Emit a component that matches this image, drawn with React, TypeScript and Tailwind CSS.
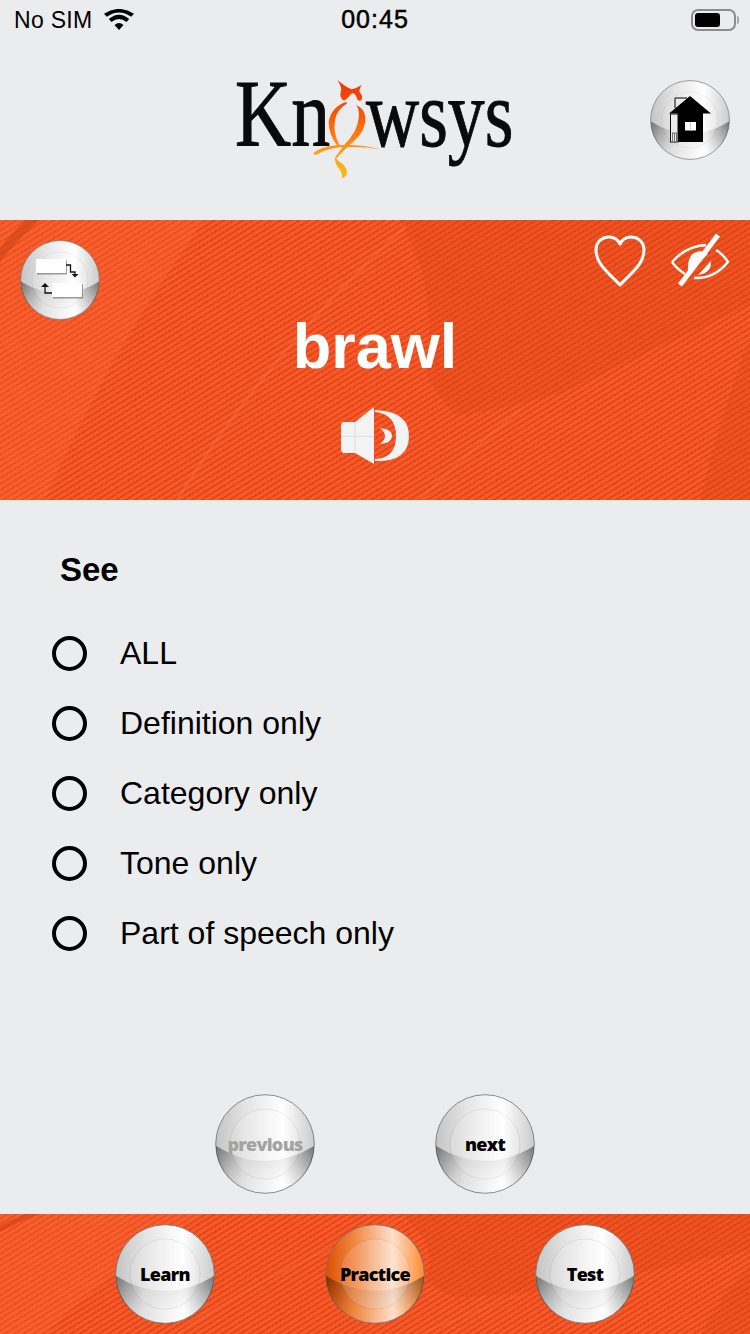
import { useId } from 'react'

const options = ['ALL', 'Definition only', 'Category only', 'Tone only', 'Part of speech only']

function Orb({ label, size = 100, tone = 'silver', muted = false, children }: any): JSX.Element {
  const id = useId().replace(/:/g, '')
  const orange = tone === 'orange'
  return (
    <div className="relative shrink-0 flex items-center justify-center" style={{ width: size, height: size }}>
      <svg viewBox="0 0 100 100" className="absolute inset-0 w-full h-full">
        <defs>
          <linearGradient id={`${id}a`} x1="0" x2="1" y1="0" y2="0">
            <stop offset="0" stopColor={orange ? '#dd4f00' : '#c4c4c4'} />
            <stop offset="0.3" stopColor={orange ? '#f08a45' : '#e4e4e4'} />
            <stop offset="0.68" stopColor={orange ? '#fde0cc' : '#ffffff'} />
            <stop offset="1" stopColor={orange ? '#ff8a2e' : '#cbcbcb'} />
          </linearGradient>
          <linearGradient id={`${id}b`} x1="0" x2="0" y1="0" y2="1">
            <stop offset="0" stopColor="#000000" stopOpacity="0.1" />
            <stop offset="0.7" stopColor="#000000" stopOpacity="0" />
          </linearGradient>
          <linearGradient id={`${id}c`} x1="0" x2="1" y1="0" y2="0">
            <stop offset="0" stopColor="#000000" stopOpacity="0.36" />
            <stop offset="0.28" stopColor="#000000" stopOpacity="0.02" />
            <stop offset="0.72" stopColor="#000000" stopOpacity="0.02" />
            <stop offset="1" stopColor="#000000" stopOpacity="0.36" />
          </linearGradient>
          <linearGradient id={`${id}f`} x1="0" x2="0" y1="52" y2="96" gradientUnits="userSpaceOnUse">
            <stop offset="0" stopColor="#ffffff" />
            <stop offset="1" stopColor="#000000" />
          </linearGradient>
          <mask id={`${id}m`}>
            <rect width="100" height="100" fill={`url(#${id}f)`} />
          </mask>
        </defs>
        <circle cx="50" cy="50" r="49.3" fill={`url(#${id}a)`} stroke="#707070" strokeWidth="0.8" />
        <path d="M1 52 Q50 82 99 52 A49 49 0 0 1 1 52 Z" fill={`url(#${id}b)`} />
        <path d="M1 52 Q50 82 99 52 A49 49 0 0 1 1 52 Z" fill={`url(#${id}c)`} mask={`url(#${id}m)`} />
        <circle cx="50" cy="50" r="35" fill="#ffffff" fillOpacity="0.12" stroke="#000000" strokeOpacity="0.1" strokeWidth="0.7" />
      </svg>
      {label && (
        <span
          className={`relative font-extrabold text-[18px] tracking-[-0.7px] font-['Open_Sans',sans-serif] ${muted ? 'text-[#a3a3a3]' : 'text-black'}`}
        >
          {label}
        </span>
      )}
      {children}
    </div>
  )
}

function Feathers(): JSX.Element {
  return (
    <svg className="absolute inset-0 w-full h-full" viewBox="0 0 750 280" preserveAspectRatio="none">
      <path d="M0 280 H45 Q110 130 205 0 H0 Z" fill="#ff6b3a" fillOpacity="0.3" />
      <path d="M0 42 Q15 22 40 0 H26 Q10 14 0 28 Z" fill="#c93c10" fillOpacity="0.5" />
      <path d="M400 0 H750 V85 Q660 125 574 168 Q510 190 455 195 Q435 175 426 152 Q440 70 400 0 Z" fill="#dd4414" fillOpacity="0.3" />
      <path d="M700 280 Q725 180 750 120 V280 Z" fill="#dd4414" fillOpacity="0.3" />
      <path d="M177 280 Q270 130 406 6" fill="none" stroke="#ff6f3f" strokeWidth="3" strokeOpacity="0.4" />
      <path d="M420 280 Q470 230 520 190" fill="none" stroke="#ff6f3f" strokeWidth="3" strokeOpacity="0.3" />
    </svg>
  )
}

function Logo(): JSX.Element {
  const letters = "block whitespace-nowrap origin-left font-['Liberation_Serif',serif] text-[96px] leading-[110px] text-[#0a0a0a] [-webkit-text-stroke:1px_#0a0a0a]"
  return (
    <div className="relative w-[310px] h-[120px]">
      <div className="flex pl-[15px] -mt-[11px]">
        <span className={`${letters} w-[131px] scale-x-[0.81]`}>Kn</span>
        <span className={`${letters} w-[150px] scale-x-[0.767]`}>wsys</span>
      </div>
      <svg viewBox="0 0 930 360" className="absolute left-0 top-0 w-full h-full">
        <defs>
          <linearGradient id="owl" x1="0" x2="0" y1="30" y2="325" gradientUnits="userSpaceOnUse">
            <stop offset="0" stopColor="#ee3408" />
            <stop offset="0.4" stopColor="#fb5e0a" />
            <stop offset="0.75" stopColor="#fda01a" />
            <stop offset="1" stopColor="#feb91f" />
          </linearGradient>
        </defs>
        <g fill="url(#owl)">
          <path d="M352 30 Q375 50 395 58 Q410 55 425 45 Q415 62 420 68 Q432 80 422 92 Q412 95 410 82 Q402 65 393 72 Q385 85 372 92 Q358 85 362 65 Q368 55 352 30 Z" />
          <path d="M378 96 Q335 110 326 155 Q325 190 352 228 L360 228 Q338 190 345 150 Q350 120 382 100 Z" />
          <path d="M408 105 Q420 118 416 145 Q412 185 375 222 L345 262 L350 265 Q375 235 400 215 Q440 180 436 140 Q432 115 408 105 Z" />
          <path d="M280 250 Q300 230 350 226 Q420 222 482 238 Q420 228 360 232 Q320 236 290 254 Q282 256 280 250 Z" />
          <path d="M345 262 Q342 280 360 300 Q368 312 365 325 Q385 320 380 300 Q375 285 358 275 Z" />
        </g>
      </svg>
    </div>
  )
}

function App(): JSX.Element {
  const texture =
    'bg-[repeating-linear-gradient(148deg,#f8592a_0px,#f8592a_3px,#e24818_3px,#e24818_5px)]'
  return (
    <div className="w-[750px] h-[1334px] overflow-hidden flex flex-col bg-[#ebecee] text-black font-['Liberation_Sans',sans-serif]">
      <div className="h-[40px] shrink-0 relative flex items-center px-[14px] text-[23px] tracking-[0.3px]">
        <span>No SIM</span>
        <svg viewBox="0 0 30 22" className="w-[30px] h-[22px] ml-[12px]">
          <path d="M15 21 L10.5 16 Q15 12 19.5 16 Z M7.5 13 L4.8 10 Q15 1.5 25.2 10 L22.5 13 Q15 7 7.5 13 Z M2.8 7.8 L0 4.8 Q15 -5 30 4.8 L27.2 7.8 Q15 -1 2.8 7.8 Z" fill="#000" />
        </svg>
        <span className="absolute left-0 right-0 text-center text-[25px] tracking-[1px] [-webkit-text-stroke:0.5px_black]">00:45</span>
        <div className="absolute left-[691px] top-[9px] flex items-center">
          <div className="w-[45px] h-[22px] rounded-[7px] border-2 border-[#8c8c8c] p-[2px]">
            <div className="w-[25px] h-full rounded-[3px] bg-black" />
          </div>
          <div className="w-[2px] h-[8px] rounded-r bg-[#a8a8a8] ml-[1px]" />
        </div>
      </div>

      <div className="h-[180px] shrink-0 relative flex items-start justify-center pt-[30px]">
        <Logo />
        <div className="absolute left-[650px] top-[40px]">
          <Orb size={80}>
            <svg viewBox="0 0 44 50" className="relative w-[44px] h-[50px] mt-[2px]">
              <path d="M22 0 L43 17.5 H35 V46 H10 V17.5 H1 Z" fill="#000" />
              <path d="M7 12 V2 H19" fill="none" stroke="#000" strokeWidth="1" />
              <rect x="2.5" y="18" width="7.5" height="28" fill="#ececec" stroke="#111" strokeWidth="1" />
              <path d="M4.5 37 V45 M6.5 37 V45 M8.5 37 V45 M4 37 H9" fill="none" stroke="#555" strokeWidth="0.8" />
              <rect x="17" y="26" width="11" height="8.5" fill="#fff" />
              <path d="M22.5 26 V34.5" stroke="#cfcfcf" strokeWidth="1" />
            </svg>
          </Orb>
        </div>
      </div>

      <div className={`h-[280px] shrink-0 relative ${texture} flex flex-col items-center`}>
        <Feathers />
        <div className="absolute left-[20px] top-[20px]">
          <Orb size={80}>
            <svg viewBox="0 0 80 80" className="absolute inset-0 w-full h-full">
              <rect x="17" y="20.5" width="30" height="14" fill="#444" fillOpacity="0.5" />
              <rect x="16" y="19" width="30" height="14" fill="#fff" />
              <path d="M46 25 H50.5 V32 H55 V35" fill="none" stroke="#111" strokeWidth="1.3" />
              <path d="M51.5 34 H58.5 L55 37.5 Z" fill="#111" />
              <rect x="33" y="44.5" width="30" height="14" fill="#444" fillOpacity="0.5" />
              <rect x="32" y="43" width="30" height="14" fill="#fff" />
              <path d="M32 53 H25 V46" fill="none" stroke="#111" strokeWidth="1.3" />
              <path d="M21 47 H29 L25 43 Z" fill="#111" />
            </svg>
          </Orb>
        </div>
        <div className="absolute right-[20px] top-[13px] flex items-center gap-[24px]">
          <svg viewBox="0 0 52 54" className="w-[52px] h-[54px]">
            <path d="M26 51 C14 38 2 30 2 16 C2 7 9 3 15 3 C20 3 24 6 26 10 C28 6 32 3 37 3 C43 3 50 7 50 16 C50 30 38 38 26 51 Z" fill="none" stroke="#fff" strokeWidth="3" strokeLinejoin="round" />
          </svg>
          <svg viewBox="0 0 60 56" className="w-[60px] h-[56px]">
            <path d="M2 29 Q16 13 36 12 M46 17 Q53 21 58 29 Q44 46 24 45 M15 41 Q7 36 2 29" fill="none" stroke="#fff" strokeWidth="2.4" />
            <path d="M38 21 L18 40 Q17 24 24 20 Q32 16 38 21 Z" fill="#fff" />
            <path d="M41 28 Q42 40 28 42 Z" fill="#fff" />
            <path d="M48 2 L10 52" stroke="#fff" strokeWidth="5" />
          </svg>
        </div>
        <h1 className="relative mt-[90px] text-[63px] leading-[72px] font-bold text-white">brawl</h1>
        <svg viewBox="0 0 90 70" className="relative mt-[18px] w-[90px] h-[70px]">
          <path d="M14 22 Q11 22 11 26 V49 Q11 53 14 53 H25 L44 64 V7 L25 22 Z" fill="#f3f3f3" />
          <path d="M11 36.5 H44 M25 22 V53" stroke="#dedede" strokeWidth="1" />
          <path d="M45 10 Q79 11 79 36 Q79 62 45 61 V59 Q66 58 66 36 Q66 14 45 12 Z" fill="#f3f3f3" />
          <path d="M50 28 Q62 29 62 36 Q62 43 50 44 Q55 40 55 36 Q55 32 50 28 Z" fill="#f3f3f3" />
        </svg>
      </div>

      <div className="flex-1 relative">
        <div className="pl-[60px] pt-[51px] text-[33px] leading-[37px] font-bold">See</div>
        <div className="mt-[30px] pl-[52px] flex flex-col">
          {options.map(option => (
            <label className="flex items-center h-[70px] text-[32px]" key={option}>
              <span className="w-[35px] h-[35px] rounded-full border-4 border-black shrink-0" />
              <span className="ml-[33px]">{option}</span>
            </label>
          ))}
        </div>
      </div>

      <div className="shrink-0 flex justify-center gap-[120px] pb-[20px]">
        <Orb label="previous" muted />
        <Orb label="next" />
      </div>

      <div className={`h-[120px] shrink-0 relative ${texture} flex items-start justify-center gap-[110px] pt-[10px]`}>
        <Feathers />
        <Orb label="Learn" />
        <Orb label="Practice" tone="orange" />
        <Orb label="Test" />
      </div>
    </div>
  )
}

export default App
